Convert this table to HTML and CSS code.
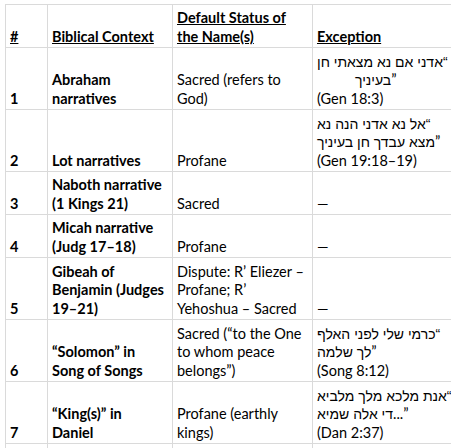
FILE: index.html
```html
<!DOCTYPE html>
<html lang="en">
<head>
<meta charset="utf-8">
<title>Sheet</title>
<link rel="stylesheet" href="styles.css">
</head>
<body>
<table class="sheet">
  <colgroup>
    <col class="c-num">
    <col class="c-ctx">
    <col class="c-status">
    <col class="c-exc">
  </colgroup>
  <tr class="r2">
    <td class="hd">#</td>
    <td class="hd">Biblical Context</td>
    <td class="hd">Default Status of<br>the Name(s)</td>
    <td class="hd">Exception</td>
  </tr>
  <tr class="r3">
    <td class="b">1</td>
    <td class="b">Abraham<br>narratives</td>
    <td>Sacred (refers to<br>God)</td>
    <td><div class="rtl he">“אדני אם נא מצאתי חן</div><div class="ind"><bdi class="he">בעיניך</bdi>”</div><div>(Gen 18:3)</div></td>
  </tr>
  <tr class="r3">
    <td class="b">2</td>
    <td class="b">Lot narratives</td>
    <td>Profane</td>
    <td><div class="rtl he">“אל נא אדני הנה נא</div><div><bdi class="he">מצא עבדך חן בעיניך</bdi>”</div><div>(Gen 19:18–19)</div></td>
  </tr>
  <tr class="r2">
    <td class="b">3</td>
    <td class="b">Naboth narrative<br>(1 Kings 21)</td>
    <td>Sacred</td>
    <td>—</td>
  </tr>
  <tr class="r2">
    <td class="b">4</td>
    <td class="b">Micah narrative<br>(Judg 17–18)</td>
    <td>Profane</td>
    <td>—</td>
  </tr>
  <tr class="r3">
    <td class="b">5</td>
    <td class="b">Gibeah of<br>Benjamin (Judges<br>19–21)</td>
    <td>Dispute: R’ Eliezer –<br>Profane; R’<br>Yehoshua – Sacred</td>
    <td>—</td>
  </tr>
  <tr class="r3">
    <td class="b">6</td>
    <td class="b">“Solomon” in<br>Song of Songs</td>
    <td>Sacred (“to the One<br>to whom peace<br>belongs”)</td>
    <td><div class="rtl he">“כרמי שלי לפני האלף</div><div><bdi class="he">לך שלמה</bdi>”</div><div>(Song 8:12)</div></td>
  </tr>
  <tr class="r3">
    <td class="b">7</td>
    <td class="b">“King(s)” in<br>Daniel</td>
    <td>Profane (earthly<br>kings)</td>
    <td><div class="rtl he">“אנת מלכא מלך מלביא</div><div><bdi class="he">די אלה שמיא</bdi>...”</div><div>(Dan 2:37)</div></td>
  </tr>
  <tr class="r1">
    <td></td>
    <td></td>
    <td></td>
    <td></td>
  </tr>
</table>
</body>
</html>
```

FILE: styles.css
```css
html, body {
  margin: 0;
  padding: 0;
  overflow: hidden;
  background: #ffffff;
}

body {
  font-family: Lato, "Liberation Sans", sans-serif;
  font-size: 14.5px;
  color: #000000;
}

.sheet {
  border-collapse: collapse;
  table-layout: fixed;
  margin: 4px 0 0 5px;
  width: 457px;
}

.c-num { width: 42px; }
.c-ctx { width: 125px; }
.c-status { width: 140px; }
.c-exc { width: 150px; }

.sheet td {
  border: 1px solid #dadada;
  vertical-align: bottom;
  padding: 0 2px 1px 4px;
  line-height: 18.5px;
  white-space: nowrap;
  overflow: hidden;
}

.r1 { height: 20px; }
.r2 { height: 43px; }
.r3 { height: 62px; }

.hd {
  font-weight: 700;
  text-decoration: underline;
}

.b { font-weight: 700; }

.he {
  font-family: "Liberation Sans", "DejaVu Sans", sans-serif;
  font-size: 14px;
}

.rtl {
  direction: rtl;
  text-align: left;
}

.ind { padding-left: 38px; }
```
